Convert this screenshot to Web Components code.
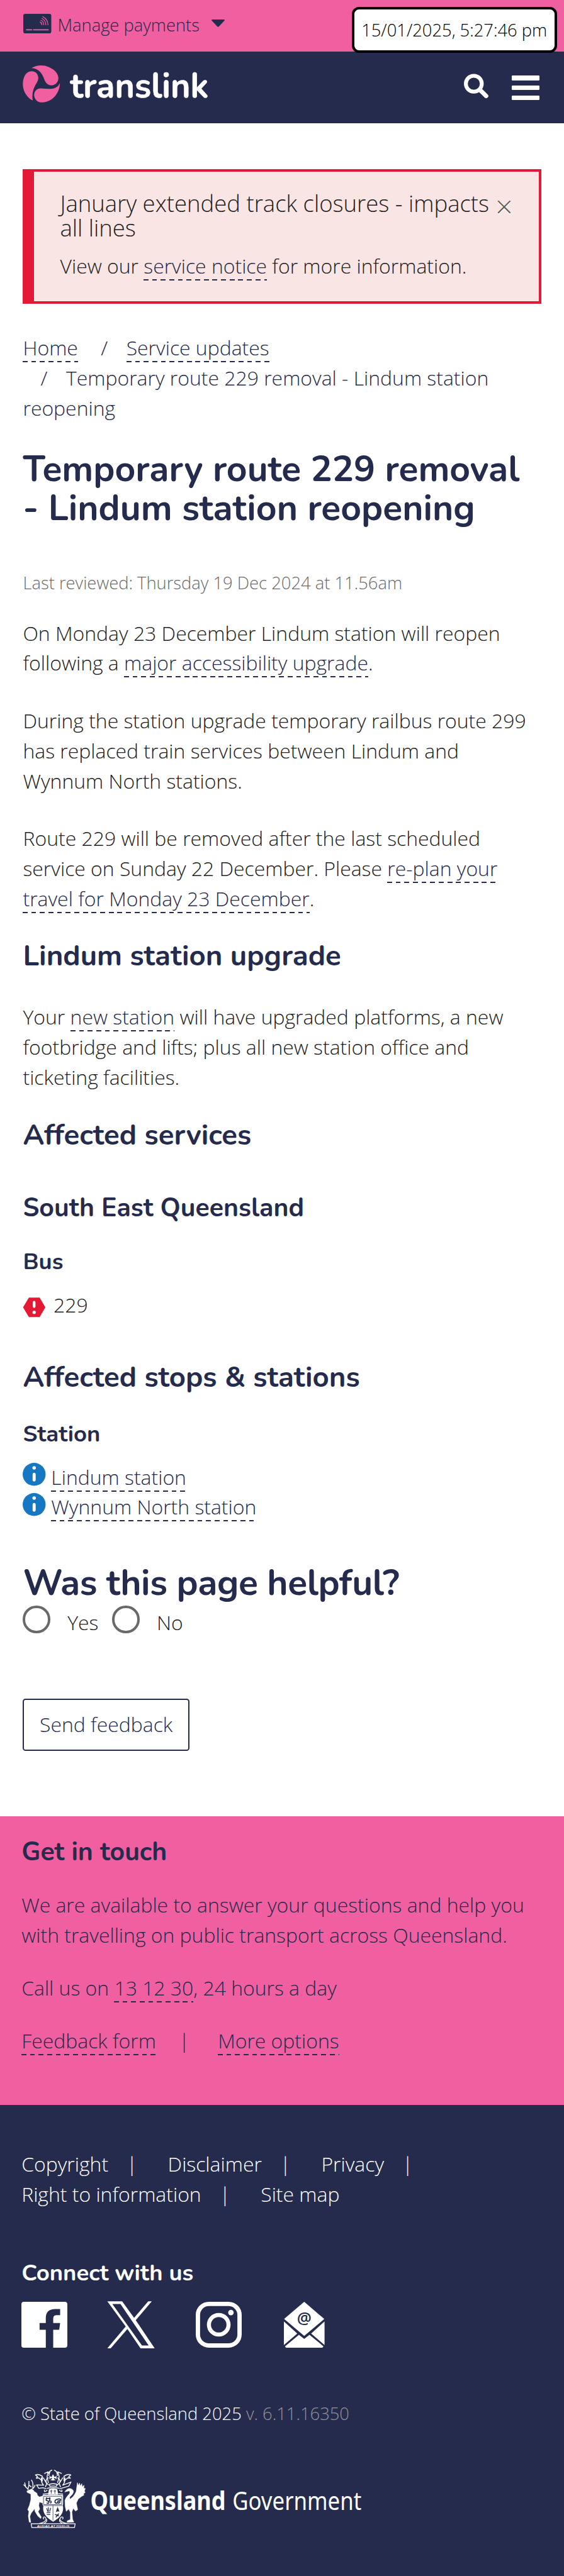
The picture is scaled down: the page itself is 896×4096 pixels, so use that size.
<!DOCTYPE html>
<html lang="en">
<head>
<meta charset="utf-8">
<title>Temporary route 229 removal - Lindum station reopening | Translink</title>
<style>
/* 1rem is ten layout units; the page is 393 units wide */
html{font-size:calc(100vw / 39.3);--navy:#252b4c;--pink:#f05fa0;--ink:#212121}
body{margin:0;background:#fff;color:var(--ink);font:300 1.4rem/2.1rem "Open Sans","Noto Sans",sans-serif;-webkit-text-size-adjust:100%}
</style>
</head>
<body>
<tl-page>
  <tl-topbar slot="top">Manage payments<tl-clock slot="clock">15/01/2025, 5:27:46 pm</tl-clock></tl-topbar>
  <tl-header slot="top"></tl-header>
  <tl-alert>
    <span slot="title">January extended track closures - impacts all lines</span>
    View our <tl-link>service notice</tl-link> for more information.
  </tl-alert>
  <tl-crumbs></tl-crumbs>
  <tl-heading level="1" style="margin-top:1.8rem">Temporary route 229 removal<br>- Lindum station reopening</tl-heading>
  <tl-text small style="margin-top:3.02rem">Last reviewed: Thursday 19 Dec 2024 at 11.56am</tl-text>
  <tl-text style="margin-top:1.58rem">On Monday 23 December Lindum station will reopen following a <tl-link>major accessibility upgrade</tl-link>.</tl-text>
  <tl-text style="margin-top:1.93rem">During the station upgrade temporary railbus route 299 has replaced train services between Lindum and Wynnum North stations.</tl-text>
  <tl-text style="margin-top:1.91rem">Route 229 will be removed after the last scheduled service on Sunday 22 December. Please <tl-link>re-plan your travel for Monday 23 December</tl-link>.</tl-text>
  <tl-heading level="2" style="margin-top:1.88rem">Lindum station upgrade</tl-heading>
  <tl-text style="margin-top:2.26rem">Your <tl-link>new station</tl-link> will have upgraded platforms, a new footbridge and lifts; plus all new station office and ticketing facilities.</tl-text>
  <tl-heading level="2" style="margin-top:1.94rem">Affected services</tl-heading>
  <tl-heading level="3" style="margin-top:3.07rem">South East Queensland</tl-heading>
  <tl-heading level="4" style="margin-top:1.87rem">Bus</tl-heading>
  <tl-item kind="warning" style="margin-top:1.1rem">229</tl-item>
  <tl-heading level="2" style="margin-top:2.98rem">Affected stops &amp; stations</tl-heading>
  <tl-heading level="4" style="margin-top:2.04rem">Station</tl-heading>
  <tl-item kind="info" style="margin-top:1.09rem"><tl-link>Lindum station</tl-link></tl-item>
  <tl-item kind="info"><tl-link>Wynnum North station</tl-link></tl-item>
  <tl-heading level="1" tight style="margin-top:2.84rem">Was this page helpful?</tl-heading>
  <tl-poll></tl-poll>
  <tl-button>Send feedback</tl-button>
  <tl-contact slot="bottom"></tl-contact>
  <tl-footer slot="bottom"></tl-footer>
</tl-page>

<script>
function define(name, html){
  const t = document.createElement('template');
  t.innerHTML = html;
  customElements.define(name, class extends HTMLElement{
    connectedCallback(){
      if(this.shadowRoot) return;
      this.attachShadow({mode:'open'}).append(t.content.cloneNode(true));
    }
  });
}

define('tl-page', `<style>
:host{display:flex;flex-direction:column;min-height:100vh}
main{padding:0 1.6rem 4.58rem;display:flow-root}
.bottom{flex:1;display:flex;flex-direction:column;background:var(--navy)}
</style><slot name="top"></slot><main><slot></slot></main><div class="bottom"><slot name="bottom"></slot></div>`);

define('tl-link', `<style>
:host{display:inline;color:var(--navy)}
a{padding-bottom:2px;-webkit-box-decoration-break:clone;box-decoration-break:clone;
background:repeating-linear-gradient(90deg,var(--navy) 0 .34rem,transparent .34rem .6rem) left bottom/100% 2px no-repeat}
</style><a><slot></slot></a>`);

define('tl-text', `<style>
:host{display:block}
:host([small]){font-size:1.2rem;line-height:1.8rem;color:#6b6b6b}
</style><slot></slot>`);

define('tl-heading', `<style>
:host{display:block;color:var(--navy);font:700 2rem/2rem Nunito,Lato,sans-serif;padding-top:.077rem;margin-bottom:-.077rem}
:host([level="1"]){font-size:2.5rem;line-height:2.7rem;padding-top:.106rem;margin-bottom:-.106rem}
:host([level="3"]){font-size:1.8rem;line-height:2rem}
:host([level="4"]){font-size:1.6rem;line-height:1.8rem;padding-top:.065rem;margin-bottom:-.065rem}
:host([light]){color:#fff}
:host([tight]){letter-spacing:-.02rem}
</style><slot></slot>`);

define('tl-topbar', `<style>
:host{display:flex;position:relative;height:3.6rem;background:var(--pink);color:var(--navy);font-size:1.2rem;line-height:1.8rem}
.card{width:1.95rem;height:1.38rem;margin:.96rem .43rem 0 1.63rem}
.label{margin-top:.83rem}
.caret{width:.92rem;height:.52rem;margin:1.38rem 0 0 .83rem}
</style>
<svg class="card" viewBox="28 26.500 176 124"><rect x="28" y="26.500" width="176" height="124" rx="13" fill="var(--navy)"/>
<g fill="none" stroke="var(--pink)" stroke-width="5" stroke-linecap="round"><path d="M134 78q11 4 11 18M139 67q18 8 18 29M145 55q25 13 25 41M151 44q32 17 32 52" transform="translate(0 0)"/></g>
<path d="M48 126.500h33M92 126.500h93" stroke="var(--pink)" stroke-width="7" stroke-linecap="round"/></svg>
<span class="label"><slot></slot></span>
<svg class="caret" viewBox="0 0 27 15"><path d="M1.500 0h24q2 0 1 2L15 14.500q-1.500 1-3 0L.5 2Q-.5 0 1.500 0z" fill="var(--navy)"/></svg>
<slot name="clock"></slot>`);

define('tl-clock', `<style>
:host{position:absolute;z-index:2;right:.5rem;top:.5rem;box-sizing:border-box;height:3.2rem;padding:.5rem;border:.2rem solid #000;border-radius:.5rem;background:#fff;color:#000;font-size:1.2rem;line-height:1.8rem;white-space:nowrap}
</style><slot></slot>`);

define('tl-header', `<style>
:host{display:flex;align-items:flex-start;height:4.98rem;background:var(--navy)}
.logo{display:block;width:13.1rem;height:3.2rem;margin:.73rem 0 0 1.5rem;overflow:visible}
.search{width:1.75rem;height:1.75rem;margin:1.53rem 1.6rem 0 auto}
.menu{width:1.92rem;display:grid;gap:.37rem;margin:1.68rem 1.72rem 0 0}
.menu i{height:.32rem;border-radius:.06rem;background:#fff}
</style>
<svg class="logo" viewBox="15 330 1179 288">
<g fill="var(--pink)">
<path d="M78 367C108 348 152 344 186 360C224 376 247 402 247 431C246 456 228 475 204 475C180 475 167 461 158 437C148 407 126 368 78 367z"/>
<path d="M24 467C25 425 42 386 79 386C104 386 121 404 121 429C121 465 76 482 86 570C50 552 24 512 24 467z"/>
<path d="M256 460C257 528 203 582 142 582C116 582 95 562 95 534C96 508 115 493 140 494C190 499 240 503 256 460z"/></g>
<text x="321" y="550" font-family="Nunito,Lato,sans-serif" font-weight="700" font-size="222" textLength="868" lengthAdjust="spacingAndGlyphs" fill="#fff" stroke="#fff" stroke-width="2" stroke-linejoin="round">translink</text></svg>
<svg class="search" viewBox="0 0 52 52"><circle cx="20.500" cy="21" r="16.500" fill="none" stroke="#fff" stroke-width="8"/><path d="M33 33.500L46 46.500" stroke="#fff" stroke-width="9" stroke-linecap="round"/></svg>
<div class="menu"><i></i><i></i><i></i></div>`);

define('tl-alert', `<style>
:host{display:flex;box-sizing:border-box;height:9.4rem;margin-top:3.22rem;padding:1.38rem 1.8rem 0 1.8rem;border:.2rem solid #e31935;border-left-width:.8rem;background:#f9e5e3}
.body{flex:1}
.title{font-size:1.6rem;line-height:1.68rem}
p{margin:.8rem 0 0}
button{all:unset;align-self:flex-start;width:1.2rem;font-size:2.1rem;line-height:2.1rem;color:#5f5b5b;text-shadow:0 .1rem 0 #fff}
</style><div class="body"><div class="title"><slot name="title"></slot></div><p><slot></slot></p></div><button>×</button>`);

define('tl-crumbs', `<style>
:host{display:block;margin-top:2rem;color:var(--navy)}
b{font-weight:300;padding:0 1.3rem 0 1.23rem}
</style><tl-link>Home</tl-link> <b>/</b><tl-link>Service updates</tl-link><br><b>/</b>Temporary route 229 removal - Lindum station reopening`);

define('tl-item', `<style>
:host{display:flex;height:2.1rem;white-space:nowrap}
svg{display:none;width:1.6rem;height:1.6rem;margin:.07rem .37rem 0 0}
:host([kind=info]) .info{display:block}
:host([kind=warning]) .warn{display:block;height:1.38rem;margin:.54rem .53rem 0 0}
</style>
<svg class="info" viewBox="0 0 48 48"><circle cx="24" cy="24" r="24" fill="#1678c2"/><circle cx="24" cy="10.500" r="3.600" fill="#fff"/><path d="M24 24v12" stroke="#fff" stroke-width="6.400" stroke-linecap="round"/></svg>
<svg class="warn" viewBox="0 0 48 41"><path d="M13 0h22.500L47.500 20.500 35.500 41H13L.8 20.500z" fill="#e31935"/><path d="M24 10v9" stroke="#fff" stroke-width="5.600" stroke-linecap="round"/><circle cx="24" cy="31" r="3.400" fill="#fff"/></svg>
<span><slot></slot></span>`);

define('tl-poll', `<style>
:host{display:flex;height:1.9rem;margin-top:.29rem}
i{box-sizing:border-box;width:1.9rem;height:1.9rem;border:.2rem solid #696969;border-radius:50%}
span{margin:.1rem 0 0 1.2rem;width:3.12rem}
</style><i></i><span>Yes</span><i></i><span>No</span>`);

define('tl-button', `<style>
:host{display:block;margin-top:4.6rem}
button{all:unset;display:block;width:fit-content;box-sizing:border-box;height:3.6rem;padding:0 1.08rem;border:.1rem solid var(--navy);border-radius:.2rem;color:var(--navy);line-height:3.36rem}
</style><button><slot></slot></button>`);

define('tl-contact', `<style>
:host{display:block;box-sizing:border-box;height:20.12rem;padding:1.44rem 1.5rem 0;background:var(--pink);color:var(--navy)}
p{margin:1.68rem 0 0}p+p{margin-top:1.6rem}
b{font-weight:300;padding:0 1.97rem 0 1.58rem}
</style><tl-heading level="3">Get in touch</tl-heading>
<p>We are available to answer your questions and help you with travelling on public transport across Queensland.</p>
<p>Call us on <tl-link>13 12 30</tl-link>, 24 hours a day</p>
<p><tl-link>Feedback form</tl-link><b>|</b><tl-link>More options</tl-link></p>`);

define('tl-footer', `<style>
:host{display:block;padding:3.1rem 1.5rem 0;color:#fff}
nav b{font-weight:300;padding:0 2.12rem 0 1.27rem}
tl-heading{margin-top:3.5rem}
.social{display:flex;margin-top:1.13rem;height:3.3rem}
.social svg{flex:none;height:3.2rem;width:3.2rem;overflow:visible}
.copy{font-size:1.2rem;line-height:1.8rem;margin-top:3.6rem}
.copy span{color:#929292}
.crest{display:block;width:23.9rem;height:4.2rem;margin:2.95rem 0 0 0;overflow:visible}
</style>
<nav>Copyright<b>|</b>Disclaimer<b>|</b>Privacy<b>|</b><br>Right to information<b>|</b>Site map</nav>
<tl-heading level="4" light>Connect with us</tl-heading>
<div class="social">
<svg viewBox="0 0 96 96" style="margin-right:2.83rem"><path fill="#fff" d="M5 0H91Q96 0 96 5V91Q96 96 91 96H66.500V58.500H79L81 44.500H66.500V35Q66.500 28 74 28H81V15H71Q51 15 51 34V44.500H38V58.500H51V96H5Q0 96 0 91V5Q0 0 5 0z"/></svg>
<svg viewBox="0 0 96 96" style="margin-right:2.93rem"><path fill="#fff" fill-rule="evenodd" d="M-2-1H29L54 33.500 83.500-1H91L57.500 38.500 97 97.500H67.500L40 57 5 97.500H-2L36.500 51.500zM8.500 4.500L70.500 91.500H84.500L25.500 4.500z"/></svg>
<svg viewBox="0 0 96 96" style="margin-right:2.93rem"><rect x="4.500" y="4.500" width="87" height="87" rx="23" fill="none" stroke="#fff" stroke-width="9"/><circle cx="48" cy="48" r="20.500" fill="none" stroke="#fff" stroke-width="8.500"/><circle cx="73.500" cy="22.500" r="5.800" fill="#fff"/></svg>
<svg viewBox="0 0 96 96"><g fill="#fff"><path d="M42.500 0L84.500 36 42.500 71.500 0.500 36z"/><path d="M0 41L28 66.500 0 90.500zM85 41V90.500L57 66.500zM31.500 69L42.500 77.500 53.500 69 82.500 93Q82 96 78 96H7Q3 96 2.500 93z"/></g>
<text x="42.500" y="46" text-anchor="middle" font-family="Open Sans,sans-serif" font-weight="600" font-size="34" fill="var(--navy)">@</text></svg>
</div>
<div class="copy">© State of Queensland 2025 <span>v. 6.11.16350</span></div>
<svg class="crest" viewBox="45 5165 717 126">
<g transform="translate(30 5150) scale(.33333)" fill="#fff" stroke="#fff" stroke-linejoin="round" stroke-linecap="round">
<g fill="none" stroke-width="5.500">
<path d="M88 178Q74 162 60 148M72 162L66 136M86 175Q94 150 92 126M104 178Q126 170 130 150M116 168Q122 140 108 118M92 150L106 160"/>
<path d="M133 86Q150 76 176 94V124L154 104 138 106 146 96zM170 104Q168 134 184 150L140 148 154 170 180 166 198 172M182 104L204 140 196 160M214 104Q196 112 200 132L214 148"/>
<path d="M355 86Q336 76 312 94V124L336 104 352 106 342 96zM318 104Q320 134 304 150L356 130 342 156 308 166 288 172M304 104L282 140 290 160M272 104Q290 112 286 132L272 148"/>
<path d="M190 76L212 66 206 98 214 134M296 76L274 66 282 98 272 134M215 75Q225 58 236 56M272 76Q264 60 252 56M224 66L216 90M266 66L272 90"/>
<path d="M220 144Q244 138 268 144L264 158Q244 152 224 158zM206 170Q244 160 282 170M190 180Q184 200 206 182M298 180Q304 200 284 182M182 206L212 204M304 206L278 204"/>
</g>
<path stroke="none" d="M243 82l8 12-4 4 12-2 6-8v26l-7-8-10-1 3 8 10 4-18 4-18-4 10-4 3-8-10 1-7 8V88l6 8 12 2-4-4z"/>
<path d="M218 174Q244 164 270 174L276 210H212z" stroke="none"/><path d="M232 180v22M226 187h12M255 180v22M249 187h12" stroke="var(--navy)" stroke-width="3.500"/>
<path stroke-width="2" d="M80 186L104 176 120 180 124 188 142 200 146 214 158 224 178 218V262L158 256 154 278 160 300 150 316 170 350 166 360 148 344 130 314 128 298 106 326 98 346 104 384 94 382 88 344 92 314 84 304 96 274 104 240 104 206 82 196z"/>
<path stroke-width="2" d="M318 192Q326 172 348 170 372 174 372 192 368 208 350 222 344 232 352 236 374 222 388 190L396 134 402 152 410 136 414 156 424 140 426 160 438 150 436 170 446 170 440 188 446 194 434 206 438 212 424 220 402 236 390 262 398 304 384 312 370 296 362 318 366 364 374 382 332 384 332 374 352 366 352 320 342 300 326 314Q316 280 318 246 322 228 344 206 354 192 344 186 334 188 318 192z"/>
<path d="M180 214H304V270Q300 278 304 290 308 340 244 376 180 340 184 290 188 278 180 270z" stroke-width="5"/>
<g fill="none" stroke="var(--navy)"><path d="M186 220H298V272H186zM186 278H302M243 278V370" stroke-width="3"/><path d="M202 230q8 8 22 0l-2 18q-8 6-14 0l-8-4zM206 262q10 6 12-6M228 262q6-6 2-12M256 258q-4-16 16-20 14-6 20 4-10 10-18 6 4 16-14 14zM276 262q14 2 10-14" stroke-width="7"/><path d="M204 296l6 18M214 290v24M228 294l-5 20M205 322h20M206 334h18" stroke-width="5"/><path d="M258 334l20 8M278 330l-16 20" stroke-width="6"/></g>
<path d="M272 286l12 30q-12-4-24 4z" fill="var(--navy)" stroke="none"/>
<path d="M106 392H382L378 416H110zM158 390Q190 386 200 366 198 346 184 350 178 358 186 362M330 390Q298 386 286 366 290 346 304 350 310 358 302 362M190 388Q206 380 204 366M298 388Q282 380 284 366" fill="none" stroke-width="5"/>
<text x="144" y="411" textLength="202" lengthAdjust="spacingAndGlyphs" font-family="Open Sans,sans-serif" font-weight="600" font-size="14" stroke="none">AUDAX AT FIDELIS</text>
</g>
<text x="189" y="5252" font-family="Noto Sans,Open Sans,sans-serif" font-weight="700" font-size="53" textLength="283" lengthAdjust="spacingAndGlyphs" fill="#fff">Queensland</text>
<text x="486" y="5252" font-family="Noto Sans,Open Sans,sans-serif" font-weight="400" font-size="53" textLength="270" lengthAdjust="spacingAndGlyphs" fill="#fff">Government</text>
</svg>`);
</script>
</body>
</html>
